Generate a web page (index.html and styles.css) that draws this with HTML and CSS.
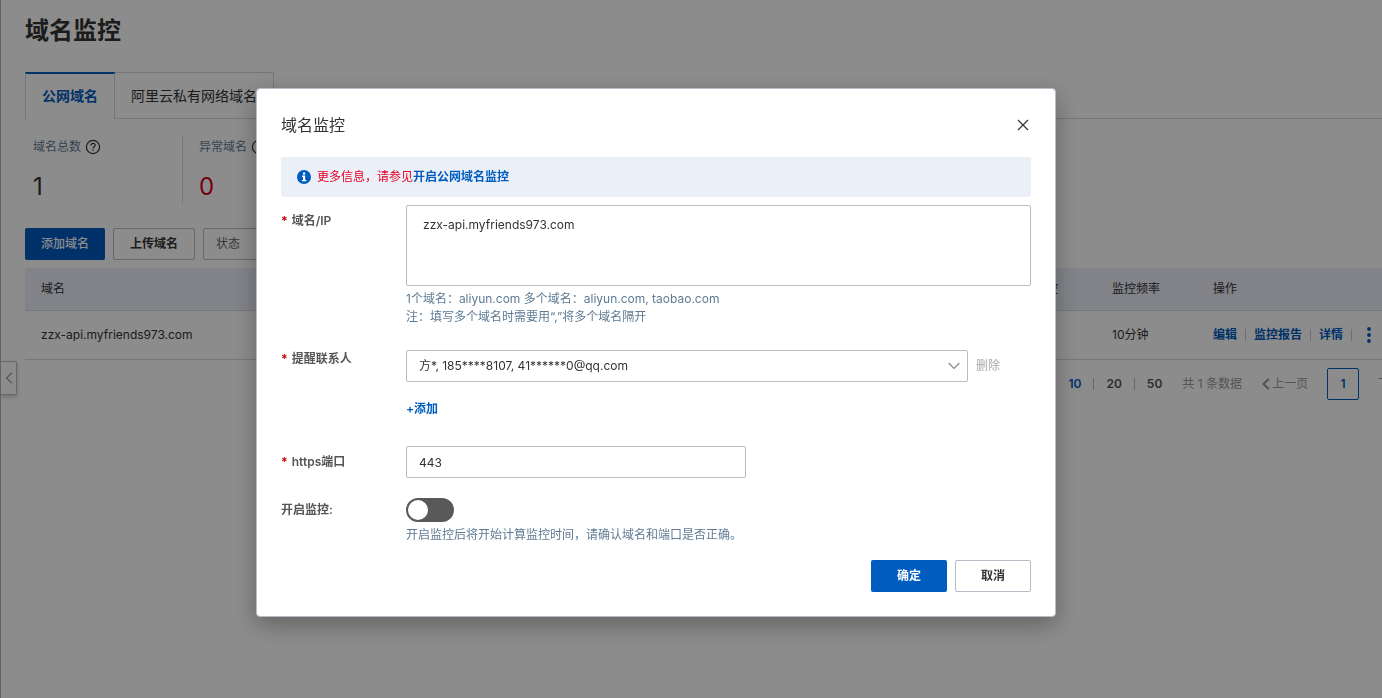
FILE: index.html
```html
<!DOCTYPE html>
<html lang="zh-CN">
<head>
<meta charset="utf-8">
<title>域名监控</title>
<link rel="stylesheet" href="styles.css">
</head>
<body>
<main class="page">
  <h1 class="page-title">域名监控</h1>
  <nav class="tabs">
    <a class="tab tab-active" href="#public">公网域名</a>
    <a class="tab" href="#private">阿里云私有网络域名</a>
    <span class="tabs-rest"></span>
  </nav>
  <section class="stats">
    <div class="stat">
      <div class="stat-label">域名总数
        <svg class="help" viewBox="0 0 16 16"><circle cx="8" cy="8" r="6.6"/><path d="M5.9 6.5C5.9 3.6 10.2 3.8 10.2 6.3C10.2 7.9 8 7.9 8 9.7M8 10.8V12"/></svg>
      </div>
      <div class="stat-value">1</div>
    </div>
    <div class="stat">
      <div class="stat-label">异常域名
        <svg class="help" viewBox="0 0 16 16"><circle cx="8" cy="8" r="6.6"/><path d="M5.9 6.5C5.9 3.6 10.2 3.8 10.2 6.3C10.2 7.9 8 7.9 8 9.7M8 10.8V12"/></svg>
      </div>
      <div class="stat-value stat-bad">0</div>
    </div>
  </section>
  <div class="toolbar">
    <button class="btn btn-primary" type="button">添加域名</button>
    <button class="btn" type="button">上传域名</button>
    <select class="filter" aria-label="状态"><option>状态</option></select>
  </div>
  <table class="table">
    <colgroup><col><col class="col-monitor"><col class="col-rate"><col class="col-actions"></colgroup>
    <thead><tr><th>域名</th><th>监控</th><th>监控频率</th><th>操作</th></tr></thead>
    <tbody>
      <tr>
        <td>zzx-api.myfriends973.com</td>
        <td></td>
        <td>10分钟</td>
        <td>
          <div class="actions">
            <a href="#edit">编辑</a><a href="#report">监控报告</a><a href="#detail">详情</a>
            <button class="more" type="button" aria-label="更多"><svg viewBox="0 0 4 16"><circle cx="2" cy="2" r="1.9"/><circle cx="2" cy="8" r="1.9"/><circle cx="2" cy="14" r="1.9"/></svg></button>
          </div>
        </td>
      </tr>
    </tbody>
  </table>
  <div class="pager">
    <div class="sizes"><a class="size-active" href="#10">10</a><a href="#20">20</a><a href="#50">50</a></div>
    <span class="total">共 1 条数据</span>
    <button class="step" type="button" disabled><svg class="step-icon" viewBox="0 0 8 12"><path d="M6.8 1L1.5 6L6.8 11"/></svg>上一页</button>
    <button class="current" type="button">1</button>
    <button class="step" type="button" disabled>下一页</button>
  </div>
  <button class="collapse" type="button" aria-label="收起"><svg viewBox="0 0 8 12"><path d="M7 0.8L1.5 6L7 11.2"/></svg></button>
</main>

<div class="overlay">
  <form class="dialog" role="dialog" aria-labelledby="dialog-title">
    <header class="dialog-head">
      <h2 class="dialog-title" id="dialog-title">域名监控</h2>
      <button class="close" type="button" aria-label="关闭"><svg viewBox="0 0 12 12"><path d="M1 1L11 11M11 1L1 11"/></svg></button>
    </header>
    <div class="notice">
      <svg class="info" viewBox="0 0 14 14"><circle cx="7" cy="7" r="7"/><rect x="6" y="2.5" width="2.2" height="2"/><path d="M5 5.6H8.2V10H9.3V11.3H4.9V10H6V6.9H5Z"/></svg>
      <p class="notice-text">更多信息，请参见<a href="#guide">开启公网域名监控</a></p>
    </div>
    <div class="row">
      <label class="label required" for="domain">域名/IP</label>
      <div>
        <textarea class="textarea" id="domain">zzx-api.myfriends973.com</textarea>
        <p class="hint">1个域名：aliyun.com 多个域名：aliyun.com, taobao.com<br>注：填写多个域名时需要用“,”将多个域名隔开</p>
      </div>
    </div>
    <div class="row row-contact">
      <label class="label required" for="contact">提醒联系人</label>
      <div>
        <div class="contact">
          <div class="select-box">
            <select class="field" id="contact"><option>方*, 185****8107, 41******0@qq.com</option></select>
            <svg class="arrow" viewBox="0 0 12 8"><path d="M0.7 1L6 6.5L11.3 1"/></svg>
          </div>
          <button class="remove" type="button" disabled>删除</button>
        </div>
        <button class="add" type="button">+添加</button>
      </div>
    </div>
    <div class="row row-port">
      <label class="label required" for="port">https端口</label>
      <input class="field port" id="port" type="text" value="443">
    </div>
    <div class="row row-switch">
      <label class="label" for="enable">开启监控:</label>
      <div>
        <input class="switch" id="enable" type="checkbox" role="switch">
        <p class="hint">开启监控后将开始计算监控时间，请确认域名和端口是否正确。</p>
      </div>
    </div>
    <footer class="dialog-foot">
      <button class="btn btn-primary btn-foot" type="submit">确定</button>
      <button class="btn btn-foot" type="button">取消</button>
    </footer>
  </form>
</div>
</body>
</html>
```
FILE: styles.css
```css
* { box-sizing: border-box; }

body {
  margin: 0;
  color: #333;
  font: 12px/18px Inter, "Noto Sans CJK SC", sans-serif;
  overflow: hidden;
}

h1, h2, p { margin: 0; }
a { color: #005cbf; font-weight: 600; text-decoration: none; }
button, input, select, textarea { margin: 0; color: inherit; font: inherit; }
button { padding: 0; border: 0; background: none; }
svg { display: block; fill: none; stroke: currentColor; }

.page {
  position: relative;
  min-height: 100vh;
  padding: 13px 0 0 24px;
  border-left: 1px solid #b0b8bf;
  overflow: hidden;
}
.page-title { font-size: 24px; line-height: 36px; font-weight: 600; }

.tabs { display: flex; margin-top: 23px; }
.tab {
  height: 47px;
  padding: 0 16px;
  border: 1px solid #d5d8dc;
  border-left: 0;
  color: #333;
  font-size: 14px;
  line-height: 46px;
  font-weight: 400;
}
.tab-active {
  border-top: 2px solid #005cbf;
  border-left: 1px solid #d5d8dc;
  border-bottom: 0;
  color: #005cbf;
  line-height: 44px;
  font-weight: 600;
}
.tabs-rest { flex: 1; border-bottom: 1px solid #d5d8dc; }

.stats { display: flex; margin-top: 16px; padding-left: 8px; }
.stat { width: 149px; height: 69px; padding-top: 3px; }
.stat + .stat { border-left: 1px solid #d5d8dc; padding-left: 16px; }
.stat-label { display: flex; align-items: center; gap: 4px; color: #5f7b94; }
.help { width: 16px; height: 16px; color: #333; stroke-width: 1.2; }
.stat-value { margin-top: 12px; font-size: 24px; line-height: 38px; }
.stat-bad { color: #d9001b; }

.toolbar { display: flex; gap: 8px; margin-top: 24px; }
.btn {
  height: 32px;
  padding: 0 16px;
  border: 1px solid #b5bdc6;
  border-radius: 2px;
  background: #fff;
  font-weight: 600;
}
.btn-primary { padding: 0 16px; border: 0; background: #005cbf; color: #fff; font-weight: 500; }
.filter {
  width: 120px;
  height: 32px;
  padding: 0 12px;
  border: 1px solid #b5bdc6;
  border-radius: 2px;
  background: #fff;
  color: #666;
  appearance: none;
}

.table { width: 100%; margin-top: 8px; border-collapse: collapse; table-layout: fixed; }
.col-monitor { width: 78px; }
.col-rate { width: 101px; }
.col-actions { width: 185px; }
.table th, .table td { padding: 0 0 0 16px; border-bottom: 1px solid #d5d8dc; text-align: left; font-weight: 400; }
.table th { height: 42px; background: #edeff8; }
.table td { height: 49px; }
.actions { display: flex; align-items: center; }
.actions a { display: flex; align-items: center; }
.actions a::after { width: 1px; height: 12px; margin: 0 8px; background: #c5cad0; content: ""; }
.more { margin-left: 7px; color: #005cbf; }
.more svg { width: 4px; height: 16px; fill: currentColor; stroke: none; }

.pager { display: flex; align-items: center; justify-content: flex-end; margin: 8px -32px 0 0; color: #999; }
.sizes { display: flex; }
.sizes a { display: flex; align-items: center; color: #555; }
.sizes a + a::before { width: 1px; height: 12px; margin: 0 12px; background: #b5bdc6; content: ""; }
.sizes .size-active { color: #005cbf; }
.total { margin: 0 20px; }
.step { display: flex; align-items: center; gap: 2px; color: #999; }
.step-icon { width: 8px; height: 12px; stroke-width: 2; }
.current {
  width: 32px;
  height: 32px;
  margin: 0 19px;
  border: 1px solid #005cbf;
  border-radius: 2px;
  color: #005cbf;
  font-weight: 600;
}

.collapse {
  position: absolute;
  top: 361px;
  left: 0;
  width: 16px;
  height: 34px;
  padding-left: 4px;
  border: 1px solid #b5bdc6;
  border-left: 0;
  border-radius: 0 2px 2px 0;
  box-shadow: 0 2px 4px rgba(0, 0, 0, 0.2);
  color: #999;
}
.collapse svg { width: 8px; height: 12px; stroke-width: 1.2; }

.overlay {
  position: fixed;
  inset: 0;
  display: flex;
  align-items: flex-start;
  justify-content: center;
  padding: 88px 70px 0 0;
  background: rgba(0, 0, 0, 0.45);
}
.dialog {
  width: 800px;
  padding: 24px;
  border: 1px solid #b5bdc6;
  border-radius: 4px;
  background: #fff;
  box-shadow: 0 8px 24px rgba(0, 0, 0, 0.3);
}
.dialog-head { display: flex; align-items: center; justify-content: space-between; height: 24px; }
.dialog-title { font-size: 16px; line-height: 24px; font-weight: 400; }
.close { padding: 2px; }
.close svg { width: 12px; height: 12px; stroke-width: 1.2; }

.notice {
  display: flex;
  align-items: center;
  gap: 6px;
  height: 40px;
  margin: 20px 0 8px;
  padding: 0 16px;
  border-radius: 2px;
  background: #ebeff8;
}
.info { width: 14px; height: 14px; fill: #fff; stroke: none; }
.info circle { fill: #005cbf; }
.notice-text { color: #e60023; }

.row { display: grid; grid-template-columns: 125px 1fr; }
.row-contact { margin-top: 24px; }
.row-port { margin-top: 28px; }
.row-switch { margin-top: 20px; }
.label { padding-top: 7px; color: #555; font-weight: 600; }
.row-switch .label { padding-top: 3px; }
.row-contact .label { padding-top: 0; }
.required::before { margin-right: 4px; color: #c8000a; font-weight: 700; content: "*"; }
.textarea {
  display: block;
  width: 100%;
  height: 81px;
  padding: 10px 16px;
  border: 1px solid #b5bdc6;
  border-radius: 2px;
  background: #fff;
  resize: none;
}
.hint { margin-top: 4px; color: #5f7b94; }
.contact { display: flex; align-items: center; gap: 8px; }
.select-box { position: relative; width: 562px; }
.field {
  display: block;
  width: 100%;
  height: 32px;
  padding: 0 12px;
  border: 1px solid #b5bdc6;
  border-radius: 2px;
  background: #fff;
  appearance: none;
}
.arrow { position: absolute; top: 12px; right: 8px; width: 12px; height: 8px; color: #888; stroke-width: 1.2; }
.remove { color: #aaa; }
.add { display: block; margin-top: 18px; color: #005cbf; font-weight: 600; }
.port { width: 340px; }
.switch {
  display: flex;
  width: 48px;
  height: 24px;
  margin: 0;
  padding: 2px;
  border-radius: 12px;
  background: #595959;
  appearance: none;
}
.switch::before { width: 20px; height: 20px; border-radius: 50%; background: #fff; content: ""; }
.switch:checked { justify-content: flex-end; background: #005cbf; }

.dialog-foot { display: flex; justify-content: flex-end; gap: 8px; margin-top: 16px; }
.btn-foot { width: 76px; padding: 0; font-weight: 600; }
```
